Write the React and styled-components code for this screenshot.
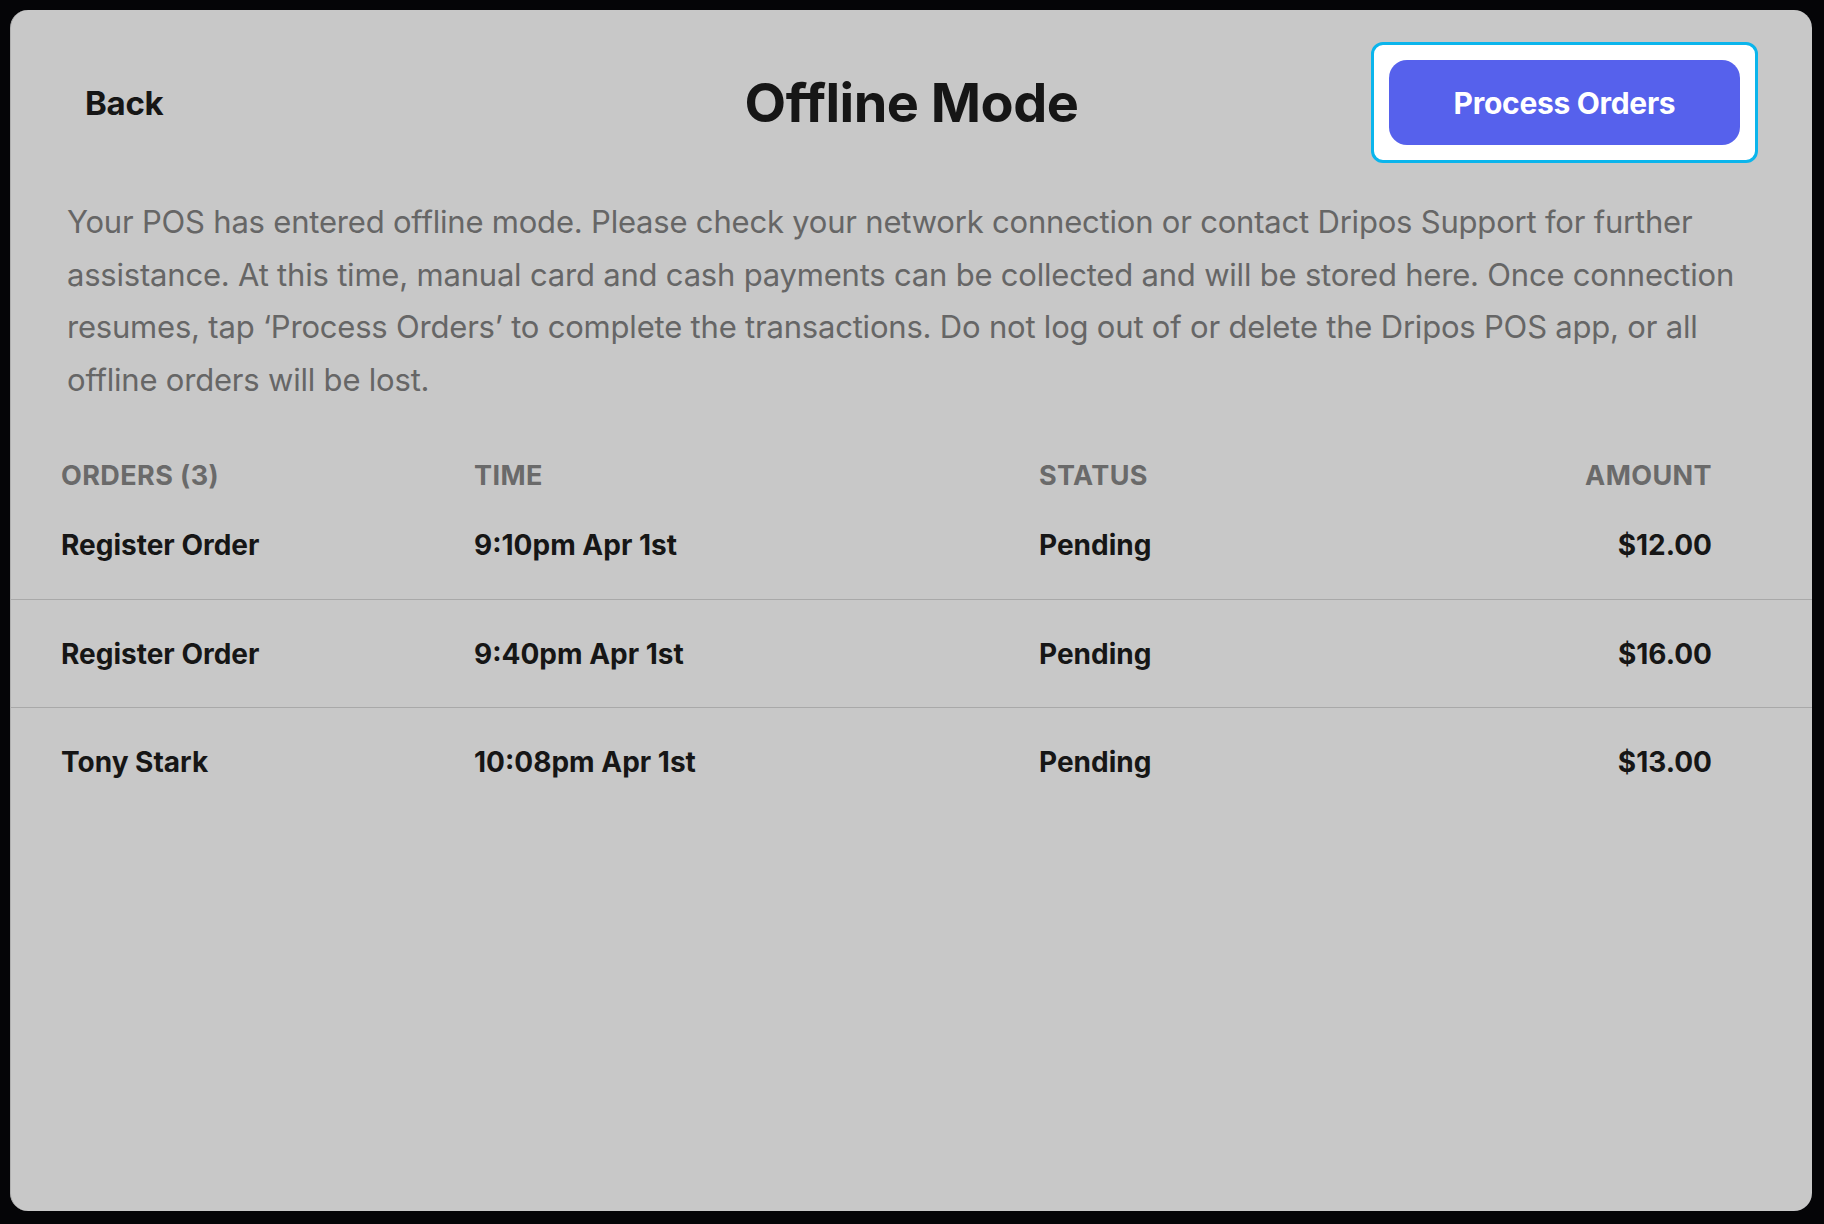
import React from 'react';
import styled, { createGlobalStyle } from 'styled-components';

const GlobalStyle = createGlobalStyle`
  html, body {
    margin: 0;
    padding: 0;
    background: #050507;
    font-family: Inter, "Noto Sans", "Liberation Sans", sans-serif;
  }
`;

const Screen = styled.div`
  box-sizing: border-box;
  height: 1224px;
  padding: 10px 12px 13px 10px;
  background: #050507;
`;

const Panel = styled.div`
  box-sizing: border-box;
  height: 100%;
  display: flex;
  flex-direction: column;
  background: #c8c8c8;
  border-radius: 18px;
  border-left: 1px solid #b0b0b0;
  overflow: hidden;
`;

const Header = styled.div`
  display: grid;
  grid-template-columns: 1fr auto 1fr;
  align-items: center;
  padding: 32px 54px 0 54px;
`;

const BackButton = styled.div`
  margin-left: 20px;
  font-size: 33px;
  font-weight: 700;
  color: #161616;
  letter-spacing: -0.3px;
`;

const Title = styled.h1`
  margin: 0;
  font-size: 54px;
  font-weight: 700;
  color: #161616;
  letter-spacing: -0.5px;
`;

const FocusRing = styled.div`
  justify-self: end;
  box-sizing: border-box;
  width: 387px;
  height: 121px;
  padding: 15px;
  background: #ffffff;
  border: 3px solid #0bb5ec;
  border-radius: 12px;
`;

const PrimaryButton = styled.button`
  width: 100%;
  height: 100%;
  border: none;
  border-radius: 18px;
  background: #5661ec;
  color: #ffffff;
  font-family: inherit;
  font-size: 30px;
  font-weight: 700;
  letter-spacing: -0.3px;
`;

const Notice = styled.p`
  margin: 33px 60px 0 56px;
  font-size: 31px;
  line-height: 52.5px;
  color: #666666;
  letter-spacing: -0.2px;
`;

const Table = styled.div`
  margin-top: 53px;
  display: flex;
  flex-direction: column;
`;

const Row = styled.div`
  box-sizing: border-box;
  display: grid;
  grid-template-columns: 413px 565px 1fr auto;
  align-items: center;
  padding: 0 100px 0 50px;
  height: ${(p) => (p.$head ? '32px' : '108px')};
  border-top: ${(p) => (p.$divider ? '1.5px solid #a9a9a9' : 'none')};
`;

const Cell = styled.div`
  font-size: ${(p) => (p.$head ? '27px' : '28px')};
  font-weight: 700;
  color: ${(p) => (p.$head ? '#6a6a6a' : '#161616')};
  text-transform: ${(p) => (p.$head ? 'uppercase' : 'none')};
  text-align: ${(p) => (p.$right ? 'right' : 'left')};
  letter-spacing: ${(p) => (p.$head ? '0.4px' : '0px')};
`;

const orders = [
  { name: 'Register Order', time: '9:10pm Apr 1st', status: 'Pending', amount: '$12.00' },
  { name: 'Register Order', time: '9:40pm Apr 1st', status: 'Pending', amount: '$16.00' },
  { name: 'Tony Stark', time: '10:08pm Apr 1st', status: 'Pending', amount: '$13.00' },
];

export default function App() {
  return (
    <>
      <GlobalStyle />
      <Screen>
        <Panel>
          <Header>
            <BackButton>Back</BackButton>
            <Title>Offline Mode</Title>
            <FocusRing>
              <PrimaryButton>Process Orders</PrimaryButton>
            </FocusRing>
          </Header>

          <Notice>
            Your POS has entered offline mode. Please check your network connection or contact Dripos
            Support for further assistance. At this time, manual card and cash payments can be collected
            and will be stored here. Once connection resumes, tap ‘Process Orders’ to complete the
            transactions. Do not log out of or delete the Dripos POS app, or all offline orders will be lost.
          </Notice>

          <Table>
            <Row $head>
              <Cell $head>Orders ({orders.length})</Cell>
              <Cell $head>Time</Cell>
              <Cell $head>Status</Cell>
              <Cell $head $right>Amount</Cell>
            </Row>
            {orders.map((order, index) => (
              <Row key={index} $divider={index > 0}>
                <Cell>{order.name}</Cell>
                <Cell>{order.time}</Cell>
                <Cell>{order.status}</Cell>
                <Cell $right>{order.amount}</Cell>
              </Row>
            ))}
          </Table>
        </Panel>
      </Screen>
    </>
  );
}
